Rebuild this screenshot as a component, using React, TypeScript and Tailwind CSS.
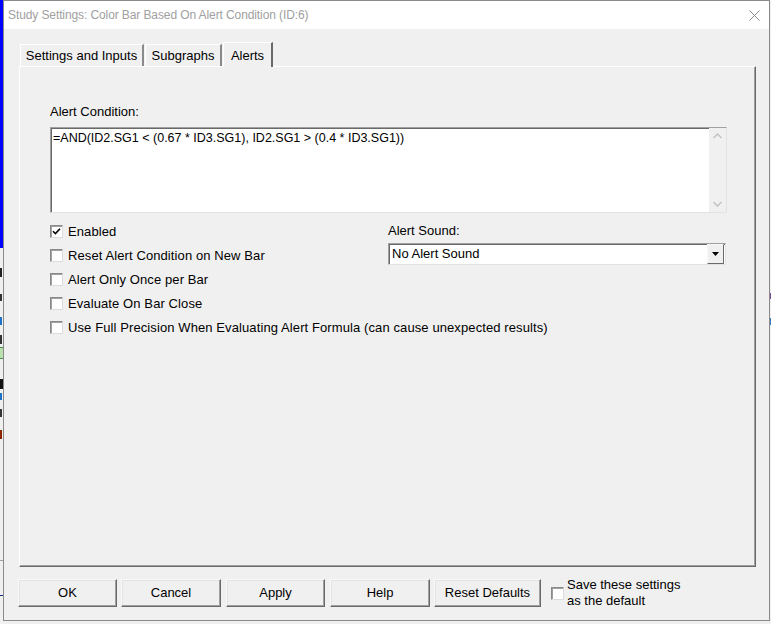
import React from 'react'

const font = "font-['Liberation_Sans',Arial,sans-serif]"

function Checkbox({ checked = false }: { checked?: boolean }) {
  return (
    <div className="w-[13px] h-[13px] shrink-0 bg-white border border-t-[#8a8a8a] border-l-[#8a8a8a] border-r-[#dcdcdc] border-b-[#dcdcdc] shadow-[inset_1px_1px_0_#a0a0a0] flex items-center justify-center">
      {checked && (
        <svg width="9" height="9" viewBox="0 0 9 9">
          <path d="M1 4.2 L3.4 6.6 L8 1.8" stroke="#000" strokeWidth="1.6" fill="none" />
        </svg>
      )}
    </div>
  )
}

function CheckRow({ label, checked }: { label: string; checked?: boolean }) {
  return (
    <div className="h-[24px] flex items-center">
      <Checkbox checked={checked} />
      <span className="ml-[5px] text-[13px] tracking-[0.1px] text-black leading-[15px] whitespace-nowrap">{label}</span>
    </div>
  )
}

function Button({ label, w }: { label: string; w: string }) {
  return (
    <div
      className={`${w} h-[28px] shrink-0 bg-[#f0f0f0] border border-t-[#f8f8f8] border-l-[#f8f8f8] border-r-[#696969] border-b-[#696969] shadow-[inset_-1px_-1px_0_#a0a0a0,inset_1px_1px_0_#e3e3e3] flex items-center justify-center text-[13px] text-black`}
    >
      {label}
    </div>
  )
}

function Tab({ label, w, active }: { label: string; w: string; active?: boolean }) {
  if (active) {
    return (
      <div
        className={`${w} h-[25px] -mb-px relative z-10 bg-[#f0f0f0] border-t border-l border-t-white border-l-white border-r-2 border-r-[#696969] flex items-start justify-center pt-[3px] text-[13px] text-black`}
      >
        {label}
      </div>
    )
  }
  return (
    <div
      className={`${w} h-[22px] bg-[#f0f0f0] border-t border-l border-t-white border-l-white border-r-2 border-r-[#8a8a8a] flex items-center justify-center text-[13px] text-black`}
    >
      {label}
    </div>
  )
}

// the sliver of the chart window showing at the left edge
function LeftStrip() {
  return (
    <div className="w-[3px] h-[624px] flex flex-col bg-[#f0f0f0]">
      <div className="h-[248px] bg-[#0000ff]" />
      <div className="h-[20px]" />
      <div className="h-[9px] w-[2px] bg-[#222]" />
      <div className="h-[17px]" />
      <div className="h-[7px] w-[2px] bg-[#333]" />
      <div className="h-[16px]" />
      <div className="h-[8px] w-[2px] bg-[#1e73c8]" />
      <div className="h-[10px]" />
      <div className="h-[9px] w-[2px] bg-[#333]" />
      <div className="h-[3px]" />
      <div className="w-[3px] h-[12px] bg-[#b8e0b0] border-y border-[#4a8a40]" />
      <div className="h-[20px]" />
      <div className="h-[10px] w-[3px] bg-[#111]" />
      <div className="h-[4px]" />
      <div className="h-[7px] w-[2px] bg-[#1e73c8]" />
      <div className="h-[9px]" />
      <div className="h-[8px] w-[2px] bg-[#333]" />
      <div className="h-[13px]" />
      <div className="h-[9px] w-[2px] bg-[#8b2500]" />
      <div className="h-[121px]" />
      <div className="h-px bg-[#a0a0a0]" />
      <div className="h-[34px]" />
      <div className="h-px bg-[#1a237e]" />
    </div>
  )
}

export default function App() {
  return (
    <div className={`w-[771px] h-[624px] bg-[#f0f0f0] flex overflow-hidden ${font}`}>
      <LeftStrip />

      {/* Dialog window */}
      <div className="w-[767px] h-[621px] shrink-0 border border-[#8a8a8a] flex flex-col bg-[#f0f0f0]">
        {/* Title bar */}
        <div className="h-[28px] bg-white flex items-center justify-between pl-[4px] pr-[8px]">
          <span className="text-[12px] text-[#a0a0a0] whitespace-nowrap tracking-[-0.1px]">
            Study Settings: Color Bar Based On Alert Condition (ID:6)
          </span>
          <svg width="11" height="11" viewBox="0 0 11 11" className="mr-[1px]">
            <path d="M0.5 0.5 L10.5 10.5 M10.5 0.5 L0.5 10.5" stroke="#8a8a8a" strokeWidth="1" />
          </svg>
        </div>

        {/* Body */}
        <div className="flex-1 flex flex-col pl-[15px] pt-[13px]">
          {/* Tabs */}
          <div className="h-[24px] flex items-end pl-[1px] gap-[1px]">
            <Tab label="Settings and Inputs" w="w-[124px]" />
            <Tab label="Subgraphs" w="w-[77px]" />
            <Tab label="Alerts" w="w-[50px]" active />
          </div>

          {/* Panel */}
          <div className="w-[737px] h-[501px] border border-t-white border-l-white border-r-[#696969] border-b-[#696969] shadow-[inset_-1px_-1px_0_#a0a0a0] pl-[30px] pt-[37px]">
            <div className="text-[13px] leading-[15px] text-black">Alert Condition:</div>

            {/* Formula box */}
            <div className="mt-[8px] w-[677px] h-[86px] bg-white border border-t-[#a0a0a0] border-l-[#a0a0a0] border-r-[#e3e3e3] border-b-[#e3e3e3] shadow-[inset_1px_1px_0_#696969] flex">
              <div className="flex-1 pl-[2px] pt-[3px] text-[12.5px] leading-[15px] text-black whitespace-nowrap">
                =AND(ID2.SG1 &lt; (0.67 * ID3.SG1), ID2.SG1 &gt; (0.4 * ID3.SG1))
              </div>
              <div className="w-[17px] bg-[#f0f0f0] flex flex-col items-center justify-between py-[5px]">
                <svg width="9" height="6" viewBox="0 0 9 6">
                  <path d="M0.5 5 L4.5 1 L8.5 5" stroke="#c0c0c0" strokeWidth="1.3" fill="none" />
                </svg>
                <svg width="9" height="6" viewBox="0 0 9 6">
                  <path d="M0.5 1 L4.5 5 L8.5 1" stroke="#c0c0c0" strokeWidth="1.3" fill="none" />
                </svg>
              </div>
            </div>

            {/* Options */}
            <div className="mt-[6px] flex">
              <div className="w-[338px] flex flex-col">
                <CheckRow label="Enabled" checked />
                <CheckRow label="Reset Alert Condition on New Bar" />
                <CheckRow label="Alert Only Once per Bar" />
                <CheckRow label="Evaluate On Bar Close" />
              </div>
              <div className="w-[339px] flex flex-col">
                <div className="h-[24px] flex items-center text-[13px] text-black">Alert Sound:</div>
                <div className="h-[22px] w-[338px] bg-white border border-t-[#a0a0a0] border-l-[#a0a0a0] border-r-[#e3e3e3] border-b-[#e3e3e3] shadow-[inset_1px_1px_0_#696969] flex items-center">
                  <span className="flex-1 pl-[3px] text-[13px] text-black">No Alert Sound</span>
                  <div className="w-[17px] h-[20px] mr-[1px] bg-[#f0f0f0] border border-t-[#f8f8f8] border-l-[#f8f8f8] border-r-[#696969] border-b-[#696969] flex items-center justify-center">
                    <svg width="7" height="4" viewBox="0 0 7 4">
                      <path d="M0 0 L7 0 L3.5 4 Z" fill="#000" />
                    </svg>
                  </div>
                </div>
              </div>
            </div>
            <CheckRow label="Use Full Precision When Evaluating Alert Formula (can cause unexpected results)" />
          </div>

          {/* Button row */}
          <div className="mt-[10px] -ml-[1px] flex items-center">
            <Button label="OK" w="w-[99px]" />
            <div className="w-[4px]" />
            <Button label="Cancel" w="w-[100px]" />
            <div className="w-[5px]" />
            <Button label="Apply" w="w-[99px]" />
            <div className="w-[5px]" />
            <Button label="Help" w="w-[100px]" />
            <div className="w-[4px]" />
            <Button label="Reset Defaults" w="w-[107px]" />
            <div className="ml-[10px] flex items-center">
              <Checkbox />
              <div className="ml-[3px] text-[13px] leading-[16px] text-black">
                Save these settings
                <br />
                as the default
              </div>
            </div>
          </div>
        </div>
      </div>

      <div className="w-[3px] h-[624px] flex flex-col bg-[#f0f0f0]">
        <div className="h-[293px]" />
        <div className="h-[6px] bg-[#7a4a9a]" />
        <div className="h-[19px]" />
        <div className="h-[7px] bg-[#3a7ac0]" />
      </div>
    </div>
  )
}
